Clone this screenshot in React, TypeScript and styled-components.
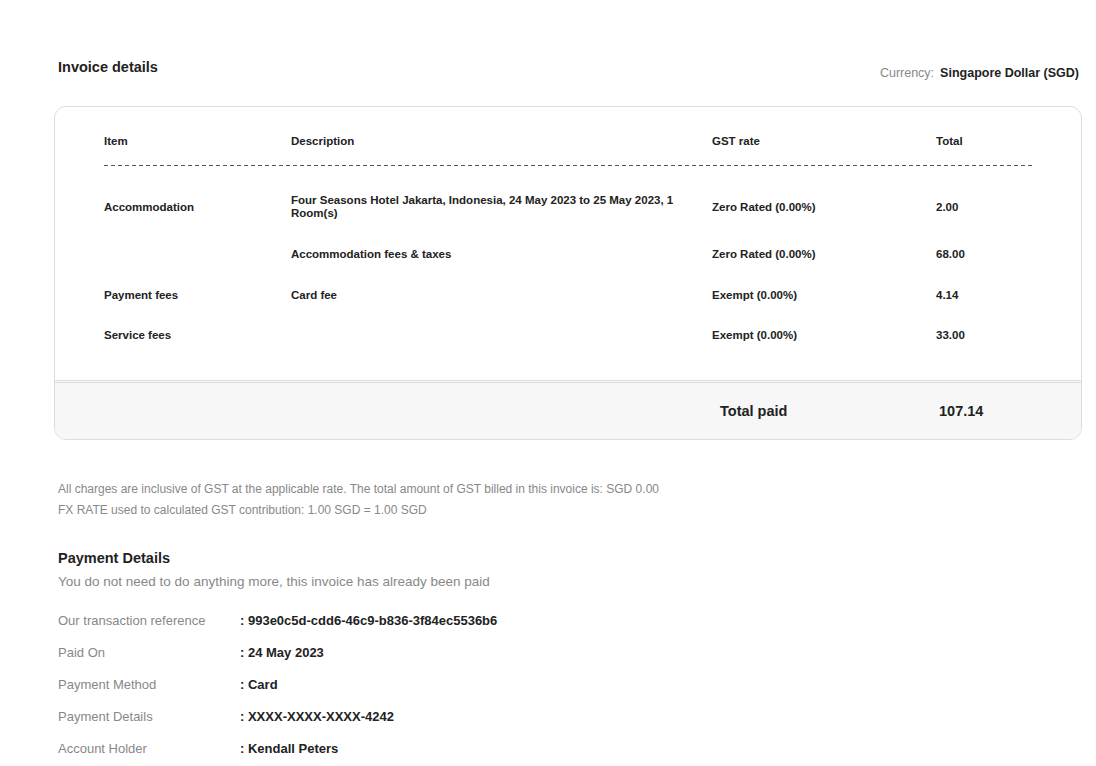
import React from "react";
import styled, { createGlobalStyle } from "styled-components";

const Global = createGlobalStyle`
  body { margin: 0; font-family: "Liberation Sans", Arial, sans-serif; color: #222; background: #fff; }
`;
const Page = styled.div`padding: 57px 14px 20px 54px;`;
const Head = styled.div`display: flex; justify-content: space-between; align-items: flex-start; padding-left: 4px;`;
const Title = styled.h2`margin: 2px 0 0; font-size: 14.5px; font-weight: bold; color: #222;`;
const Currency = styled.div`font-size: 12.5px; color: #888; margin-top: 9px; margin-right: 3px; b { color: #222; margin-left: 6px; }`;
const Card = styled.div`margin-top: 26px; border: 1px solid #ddd; border-radius: 12px; overflow: hidden;`;
const Body = styled.div`padding: 26px 46px 24px 49px;`;
const Row = styled.div<{ $h: number }>`
  display: grid; grid-template-columns: 187px 421px 224px 1fr; align-items: center;
  min-height: ${p => p.$h}px; font-size: 11.5px; font-weight: bold; color: #222;
`;
const Desc = styled.div`padding-right: 22px; line-height: 13px;`;
const Dashed = styled.div`
  height: 1px; margin: 16px 0 16px;
  background-image: linear-gradient(to right, #555 0 4px, transparent 4px 7px);
  background-size: 7px 1px;
`;
const Foot = styled.div`
  background: #f7f7f7; border-top: 3px double #ddd; height: 56px;
  display: grid; grid-template-columns: 665px 219px 1fr; align-items: center;
  font-size: 14.5px; font-weight: bold; color: #222;
`;
const Notes = styled.div`margin-top: 39px; padding-left: 4px; font-size: 12px; color: #888; line-height: 21px;`;
const Pay = styled.div`margin-top: 29px; padding-left: 4px;`;
const Sub = styled.div`font-size: 13.5px; color: #888; margin-top: 8px;`;
const Rows = styled.div`margin-top: 15px;`;
const PRow = styled.div`display: grid; grid-template-columns: 182px 1fr; height: 32px; align-items: center; font-size: 13px;`;
const L = styled.span`color: #888;`;
const V = styled.span`font-weight: bold; color: #222; font-size: 13px;`;

const rows = [
  { h: 50, a: "Accommodation", d: "Four Seasons Hotel Jakarta, Indonesia, 24 May 2023 to 25 May 2023, 1 Room(s)", g: "Zero Rated (0.00%)", t: "2.00" },
  { h: 44, a: "", d: "Accommodation fees & taxes", g: "Zero Rated (0.00%)", t: "68.00" },
  { h: 38, a: "Payment fees", d: "Card fee", g: "Exempt (0.00%)", t: "4.14" },
  { h: 42, a: "Service fees", d: "", g: "Exempt (0.00%)", t: "33.00" },
];
const pay = [
  ["Our transaction reference", "993e0c5d-cdd6-46c9-b836-3f84ec5536b6"],
  ["Paid On", "24 May 2023"],
  ["Payment Method", "Card"],
  ["Payment Details", "XXXX-XXXX-XXXX-4242"],
  ["Account Holder", "Kendall Peters"],
];

export default function App() {
  return (
    <Page>
      <Global />
      <Head>
        <Title>Invoice details</Title>
        <Currency>Currency:<b>Singapore Dollar (SGD)</b></Currency>
      </Head>
      <Card>
        <Body>
          <Row $h={16}><div>Item</div><div>Description</div><div>GST rate</div><div>Total</div></Row>
          <Dashed />
          {rows.map((r, i) => (
            <Row key={i} $h={r.h}><div>{r.a}</div><Desc>{r.d}</Desc><div>{r.g}</div><div>{r.t}</div></Row>
          ))}
        </Body>
        <Foot><div /><div>Total paid</div><div>107.14</div></Foot>
      </Card>
      <Notes>
        <div>All charges are inclusive of GST at the applicable rate. The total amount of GST billed in this invoice is: SGD 0.00</div>
        <div>FX RATE used to calculated GST contribution: 1.00 SGD = 1.00 SGD</div>
      </Notes>
      <Pay>
        <Title>Payment Details</Title>
        <Sub>You do not need to do anything more, this invoice has already been paid</Sub>
        <Rows>
          {pay.map(([l, v]) => (
            <PRow key={l}><L>{l}</L><V>: {v}</V></PRow>
          ))}
        </Rows>
      </Pay>
    </Page>
  );
}
